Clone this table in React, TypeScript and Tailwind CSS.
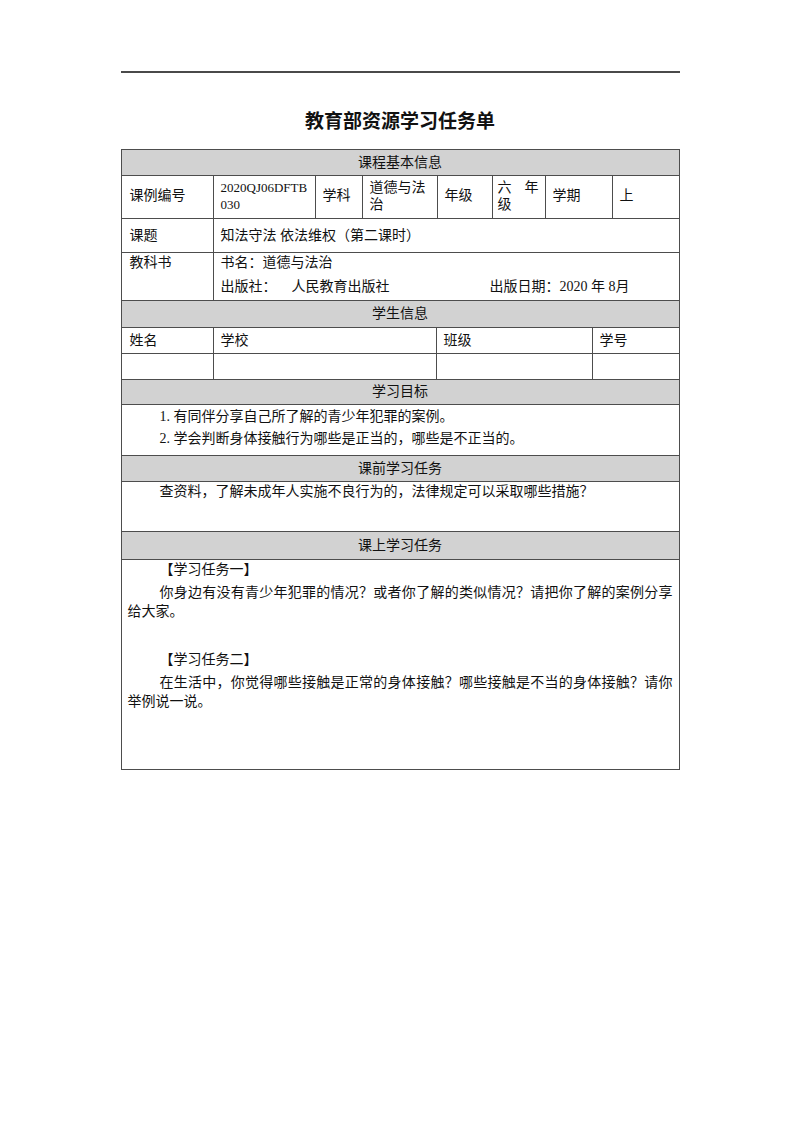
import React from "react"

const font = "font-['Liberation_Serif','Noto_Sans_CJK_SC',serif]"

function Band({ title, h }: { title: string; h: string }) {
  return (
    <div className={`flex items-center justify-center border-t border-[#4d4d4d] bg-[#d2d2d2] ${h}`}>
      <span className="leading-[20px]">{title}</span>
    </div>
  )
}

export default function App() {
  return (
    <div className={`min-h-[1132px] bg-white pt-[71px] text-[14px] text-[#111] ${font}`}>
      <div className="mx-auto w-[559px]">
        <div className="h-[2px] bg-[#4a4a4a]" />
        <h1 className="mt-[34px] text-center font-['Noto_Sans_CJK_SC',sans-serif] text-[19px] font-bold leading-[26px]">
          教育部资源学习任务单
        </h1>

        <div className="mt-[16px] border border-[#4d4d4d]">
          {/* 课程基本信息 */}
          <div className="flex h-[25px] items-center justify-center bg-[#d2d2d2]">
            <span className="leading-[20px]">课程基本信息</span>
          </div>

          <div className="flex h-[43px] border-t border-[#4d4d4d] leading-[17px]">
            <div className="flex w-[91px] items-center pb-[3px] pl-[8px]">课例编号</div>
            <div className="flex w-[102px] items-center border-l border-[#4d4d4d] pb-[3px] pl-[7px]">
              <span className="text-[13px]">
                2020QJ06DFTB
                <br />
                030
              </span>
            </div>
            <div className="flex w-[47px] items-center border-l border-[#4d4d4d] pb-[3px] pl-[7px]">学科</div>
            <div className="flex w-[75px] items-center border-l border-[#4d4d4d] pb-[3px] pl-[7px]">
              <span>
                道德与法
                <br />
                治
              </span>
            </div>
            <div className="flex w-[55px] items-center border-l border-[#4d4d4d] pb-[3px] pl-[7px]">年级</div>
            <div className="flex w-[53px] items-center border-l border-[#4d4d4d] pb-[3px] pl-[5px] pr-[6px]">
              <div className="w-full">
                <div className="flex justify-between">
                  <span>六</span>
                  <span>年</span>
                </div>
                <div>级</div>
              </div>
            </div>
            <div className="flex w-[67px] items-center border-l border-[#4d4d4d] pb-[3px] pl-[7px]">学期</div>
            <div className="flex flex-1 items-center border-l border-[#4d4d4d] pb-[3px] pl-[7px]">上</div>
          </div>

          <div className="flex h-[34px] border-t border-[#4d4d4d]">
            <div className="flex w-[91px] items-center pl-[8px]">课题</div>
            <div className="flex flex-1 items-center border-l border-[#4d4d4d] pl-[7px]">
              知法守法 依法维权（第二课时）
            </div>
          </div>

          <div className="flex h-[48px] border-t border-[#4d4d4d] leading-[20px]">
            <div className="w-[91px] pl-[8px]">教科书</div>
            <div className="flex flex-1 flex-col gap-[4px] border-l border-[#4d4d4d] pl-[7px]">
              <div>书名：道德与法治</div>
              <div className="flex">
                <span className="w-[71px]">出版社：</span>
                <span className="w-[198px]">人民教育出版社</span>
                <span>出版日期：2020 年 8月</span>
              </div>
            </div>
          </div>

          {/* 学生信息 */}
          <Band title="学生信息" h="h-[27px]" />

          <div className="flex h-[26px] border-t border-[#4d4d4d]">
            <div className="flex w-[91px] items-center pl-[8px]">姓名</div>
            <div className="flex w-[223px] items-center border-l border-[#4d4d4d] pl-[7px]">学校</div>
            <div className="flex w-[156px] items-center border-l border-[#4d4d4d] pl-[7px]">班级</div>
            <div className="flex flex-1 items-center border-l border-[#4d4d4d] pl-[7px]">学号</div>
          </div>

          <div className="flex h-[26px] border-t border-[#4d4d4d]">
            <div className="w-[91px]" />
            <div className="w-[223px] border-l border-[#4d4d4d]" />
            <div className="w-[156px] border-l border-[#4d4d4d]" />
            <div className="flex-1 border-l border-[#4d4d4d]" />
          </div>

          {/* 学习目标 */}
          <Band title="学习目标" h="h-[25px]" />

          <div className="h-[51px] border-t border-[#4d4d4d] px-[6px] pt-[1px] leading-[22px]">
            <p className="indent-[32px]">1. 有同伴分享自己所了解的青少年犯罪的案例。</p>
            <p className="indent-[32px]">2. 学会判断身体接触行为哪些是正当的，哪些是不正当的。</p>
          </div>

          {/* 课前学习任务 */}
          <Band title="课前学习任务" h="h-[26px]" />

          <div className="h-[50px] border-t border-[#4d4d4d] px-[6px] leading-[20px]">
            <p className="indent-[32px]">查资料，了解未成年人实施不良行为的，法律规定可以采取哪些措施？</p>
          </div>

          {/* 课上学习任务 */}
          <Band title="课上学习任务" h="h-[28px]" />

          <div className="h-[210px] border-t border-[#4d4d4d] px-[6px]">
            <p className="mb-[3px] indent-[32px] leading-[20px]">【学习任务一】</p>
            <div className="leading-[19px]">
              <div className="whitespace-nowrap pl-[32px] [text-align-last:justify]">
                你身边有没有青少年犯罪的情况？或者你了解的类似情况？请把你了解的案例分享
              </div>
              <div>给大家。</div>
            </div>
            <p className="mb-[3px] mt-[29px] indent-[32px] leading-[20px]">【学习任务二】</p>
            <div className="leading-[19px]">
              <div className="whitespace-nowrap pl-[32px] [text-align-last:justify]">
                在生活中，你觉得哪些接触是正常的身体接触？哪些接触是不当的身体接触？请你
              </div>
              <div>举例说一说。</div>
            </div>
          </div>
        </div>
      </div>
    </div>
  )
}
